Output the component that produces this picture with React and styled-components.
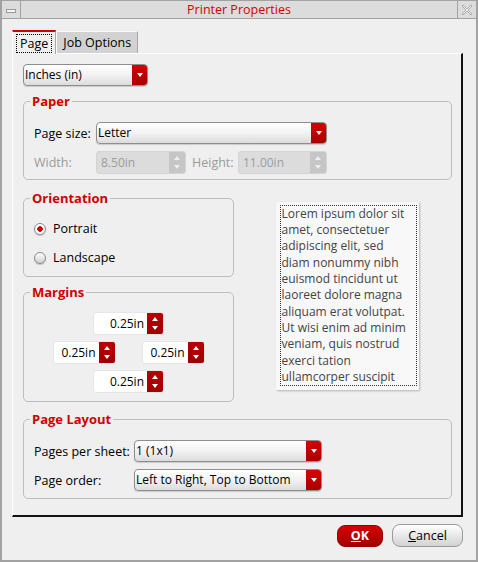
import React from 'react'
import styled, { createGlobalStyle } from 'styled-components'

const GlobalStyle = createGlobalStyle`
  html, body { margin:0; padding:0; background:#efefef; }
  body { font-family:"Open Sans", "Noto Sans", "DejaVu Sans", sans-serif; font-size:12px; color:#000; }
  * { box-sizing:border-box; }
`

function Combo({ value, width }) {
  return (
    <ComboBox style={{ width }}>
      <ComboText>{value}</ComboText>
      <ComboButton><DownArrow /></ComboButton>
    </ComboBox>
  )
}

function Spin({ value, width, disabled }) {
  return (
    <SpinBox style={{ width }} disabled={disabled}>
      <SpinField disabled={disabled}>{value}</SpinField>
      <SpinButtons disabled={disabled}>
        <UpArrow disabled={disabled} />
        <SpinDown disabled={disabled} />
      </SpinButtons>
    </SpinBox>
  )
}

function App() {
  return (
    <>
      <GlobalStyle />
      <Window>
        <TitleBar>
          <TitleButton side="left"><MinIcon /></TitleButton>
          <Title>Printer Properties</Title>
          <TitleButton side="right">
            <svg width="12" height="12" viewBox="0 0 12 12">
              <path d="M1 2 L2 1 L6 5 L10 1 L11 2 L7 6 L11 10 L10 11 L6 7 L2 11 L1 10 L5 6 Z" fill="#f4f4f4" stroke="#9a9a9a" strokeWidth="0.8" />
            </svg>
          </TitleButton>
        </TitleBar>

        <Body>
          <TabBar>
            <Tab active><FocusText>Page</FocusText></Tab>
            <Tab>Job Options</Tab>
          </TabBar>

          <Panel>
            <Combo value="Inches (in)" width={125} />

            <Group style={{ marginTop: 7 }}>
              <Legend>Paper</Legend>
              <Row>
                <Label w={62}>Page size:</Label>
                <Combo value="Letter" width={231} />
              </Row>
              <Row style={{ marginTop: 7 }}>
                <Label w={62} dim>Width:</Label>
                <Spin value="8.50in" width={90} disabled />
                <Label w={46} dim style={{ marginLeft: 6 }}>Height:</Label>
                <Spin value="11.00in" width={89} disabled />
              </Row>
            </Group>

            <Middle>
              <LeftCol>
                <Group pb={4}>
                  <Legend>Orientation</Legend>
                  <RadioRow>
                    <Radio checked />
                    <span>Portrait</span>
                  </RadioRow>
                  <RadioRow>
                    <Radio />
                    <span>Landscape</span>
                  </RadioRow>
                </Group>

                <Group style={{ marginTop: 7 }}>
                  <Legend>Margins</Legend>
                  <MarginGrid>
                    <MarginRow><Spin value="0.25in" width={71} /></MarginRow>
                    <MarginRow gap={26}>
                      <Spin value="0.25in" width={63} />
                      <Spin value="0.25in" width={63} />
                    </MarginRow>
                    <MarginRow><Spin value="0.25in" width={71} /></MarginRow>
                  </MarginGrid>
                </Group>
              </LeftCol>

              <PreviewCol>
                <Preview>
                  <PreviewText>
                    Lorem ipsum dolor sit amet, consectetuer adipiscing elit, sed diam nonummy nibh euismod tincidunt ut laoreet dolore magna aliquam erat volutpat. Ut wisi enim ad minim veniam, quis nostrud exerci tation ullamcorper suscipit
                  </PreviewText>
                </Preview>
              </PreviewCol>
            </Middle>

            <Group pb={7} style={{ marginTop: 9 }}>
              <Legend>Page Layout</Legend>
              <Row>
                <Label w={100}>Pages per sheet:</Label>
                <Combo value="1 (1x1)" width={188} />
              </Row>
              <Row style={{ marginTop: 7 }}>
                <Label w={100}>Page order:</Label>
                <Combo value="Left to Right, Top to Bottom" width={188} />
              </Row>
            </Group>
          </Panel>

          <ButtonRow>
            <OkButton><u>O</u>K</OkButton>
            <CancelButton><u>C</u>ancel</CancelButton>
          </ButtonRow>
        </Body>
      </Window>
    </>
  )
}

export default App

const Window = styled.div`
  width:478px;
  height:562px;
  border:2px solid #a2a2a2;
  border-top:1px solid #a2a2a2;
  background:#efefef;
  display:flex;
  flex-direction:column;
`
const TitleBar = styled.div`
  height:18px;
  display:flex;
  align-items:stretch;
  background:#dcdcdc;
  border-bottom:1px solid #a2a2a2;
`
const TitleButton = styled.div`
  width:19px;
  display:flex;
  align-items:center;
  justify-content:center;
  ${p => p.side === 'left' ? 'border-right:1px solid #a2a2a2;' : 'border-left:1px solid #a2a2a2;'}
  background:#dcdcdc;
`
const MinIcon = styled.div`
  width:10px;
  height:4px;
  border:1px solid #9a9a9a;
  background:#f4f4f4;
  margin-top:2px;
`
const Title = styled.div`
  flex:1;
  text-align:center;
  color:#d40000;
  font-size:12.5px;
  line-height:17px;
`
const Body = styled.div`
  flex:1;
  padding:11px 13px 0 10px;
  display:flex;
  flex-direction:column;
`
const TabBar = styled.div`
  display:flex;
  align-items:flex-end;
  height:23px;
`
const Tab = styled.div`
  height:${p => p.active ? '24px' : '22px'};
  margin-bottom:${p => p.active ? '-1px' : '0'};
  padding:0 ${p => p.active ? '3px' : '6px'};
  display:flex;
  align-items:center;
  font-size:12.5px;
  background:${p => p.active ? '#efefef' : '#d2d2d2'};
  border-top:${p => p.active ? '2px solid #d00000' : '1px solid #f8f8f8'};
  border-left:1px solid #fafafa;
  border-right:1px solid #a8a8a8;
  position:relative;
  z-index:${p => p.active ? 1 : 0};
`
const FocusText = styled.span`
  border:1px dotted #000;
  padding:0 3px;
  line-height:17px;
`
const Panel = styled.div`
  height:464px;
  border-top:1px solid #fff;
  border-left:1px solid #fff;
  border-right:2px solid #111;
  border-bottom:2px solid #111;
  padding:10px 9px 0 10px;
  display:flex;
  flex-direction:column;
`
const ComboBox = styled.div`
  height:22px;
  display:flex;
  border:1px solid #8e8e8e;
  border-radius:4px;
  background:linear-gradient(#ffffff, #f2f2f2 50%, #dcdcdc);
  box-shadow:0 1px 1px rgba(0,0,0,0.15);
  overflow:hidden;
`
const ComboText = styled.div`
  flex:1;
  padding-left:1px;
  line-height:20px;
  font-size:12px;
  white-space:nowrap;
`
const ComboButton = styled.div`
  width:15px;
  display:flex;
  align-items:center;
  justify-content:center;
  background:linear-gradient(#d80000, #a80000);
`
const DownArrow = styled.div`
  width:0;
  height:0;
  border-left:3.5px solid transparent;
  border-right:3.5px solid transparent;
  border-top:4px solid #fff;
`
const UpArrow = styled.div`
  width:0;
  height:0;
  border-left:3.5px solid transparent;
  border-right:3.5px solid transparent;
  border-bottom:4px solid ${p => p.disabled ? '#eee' : '#fff'};
`
const SpinDown = styled.div`
  width:0;
  height:0;
  border-left:3.5px solid transparent;
  border-right:3.5px solid transparent;
  border-top:4px solid ${p => p.disabled ? '#eee' : '#fff'};
`
const SpinBox = styled.div`
  height:23px;
  display:flex;
  border-radius:3px;
  overflow:hidden;
  background:${p => p.disabled ? '#dcdcdc' : '#fff'};
  border:1px solid ${p => p.disabled ? '#d4d4d4' : '#e6e6e6'};
`
const SpinField = styled.div`
  flex:1;
  text-align:${p => p.disabled ? 'left' : 'right'};
  padding:0 3px 0 4px;
  line-height:21px;
  font-size:12px;
  color:${p => p.disabled ? '#9c9c9c' : '#000'};
`
const SpinButtons = styled.div`
  width:16px;
  display:flex;
  flex-direction:column;
  align-items:center;
  justify-content:center;
  gap:5px;
  background:${p => p.disabled ? '#c6c6c6' : 'linear-gradient(#b80000, #a00000)'};
`
const Group = styled.fieldset`
  margin:0;
  padding:0 10px ${p => p.pb || 5}px 10px;
  border:1px solid #bdbdbd;
  border-radius:5px;
  min-width:0;
`
const Legend = styled.legend`
  padding:0 2px;
  margin-left:-4px;
  color:#d00000;
  font-weight:700;
  font-size:13px;
  line-height:16px;
`
const Row = styled.div`
  display:flex;
  align-items:center;
  &:first-of-type { margin-top:13px; }
`
const Label = styled.div`
  width:${p => p.w}px;
  flex:none;
  font-size:12.5px;
  color:${p => p.dim ? '#9a9a9a' : '#000'};
  white-space:nowrap;
`
const Middle = styled.div`
  display:grid;
  grid-template-columns:211px 1fr;
  margin-top:10px;
`
const LeftCol = styled.div`
  display:flex;
  flex-direction:column;
`
const RadioRow = styled.div`
  display:flex;
  align-items:center;
  gap:7px;
  height:29px;
  font-size:12.5px;
  &:first-of-type { margin-top:8px; }
`
const Radio = styled.div`
  width:12px;
  height:12px;
  border-radius:50%;
  border:1px solid #8a8a8a;
  background:${p => p.checked
    ? 'radial-gradient(circle, #d00000 0 2.5px, #fff 3px)'
    : 'linear-gradient(#fff, #d0d0d0)'};
  box-shadow:0 1px 1px rgba(0,0,0,0.2);
`
const MarginGrid = styled.div`
  display:flex;
  flex-direction:column;
  gap:6px;
  margin-top:12px;
  margin-bottom:3px;
`
const MarginRow = styled.div`
  display:flex;
  justify-content:center;
  gap:${p => p.gap || 0}px;
`
const PreviewCol = styled.div`
  display:flex;
  align-items:center;
  justify-content:center;
  padding-left:8px;
`
const Preview = styled.div`
  width:143px;
  background:#f8f8f8;
  padding:3px 2px 4px 4px;
  box-shadow:1px 1px 2px rgba(0,0,0,0.25);
`
const PreviewText = styled.div`
  border:1px dotted #333;
  padding:0 1px;
  font-size:12px;
  line-height:16.3px;
  color:#444;
`
const ButtonRow = styled.div`
  display:flex;
  justify-content:flex-end;
  align-items:center;
  gap:9px;
  margin-top:7px;
`
const OkButton = styled.button`
  width:46px;
  height:22px;
  border:1px solid #900;
  border-radius:8px;
  background:linear-gradient(#d80000, #a00000);
  color:#fff;
  font-family:inherit;
  font-weight:700;
  font-size:12.5px;
  padding:0;
`
const CancelButton = styled.button`
  width:71px;
  height:23px;
  border:1px solid #9a9a9a;
  border-radius:8px;
  background:linear-gradient(#ffffff, #e8e8e8 50%, #d2d2d2);
  color:#000;
  font-family:inherit;
  font-size:12.5px;
  padding:0;
`
